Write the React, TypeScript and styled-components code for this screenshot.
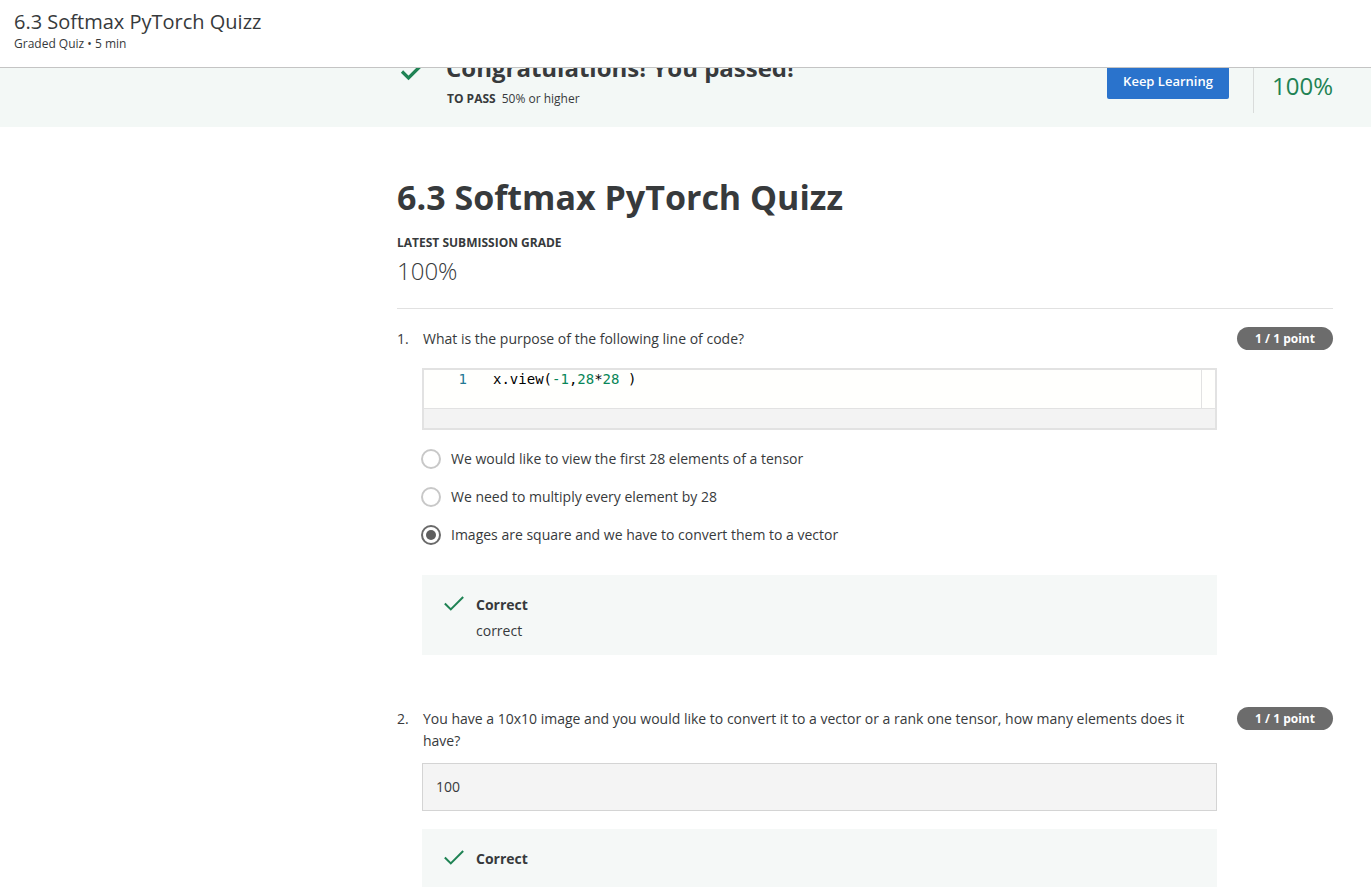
import React from "react";
import styled, { createGlobalStyle } from "styled-components";

const Global = createGlobalStyle`
  html, body { margin: 0; padding: 0; background: #fff; }
  body { font-family: "Open Sans", "Liberation Sans", sans-serif; color: #373a3c; }
  * { box-sizing: border-box; }
`;

const Header = styled.header`
  position: fixed;
  top: 0; left: 0; right: 0;
  height: 68px;
  background: #fff;
  border-bottom: 1px solid #c4c4c4;
  padding: 9px 14px 0;
  z-index: 10;
`;
const HeaderTitle = styled.div`
  font-size: 20px;
  line-height: 26px;
  color: #373a3c;
`;
const HeaderSub = styled.div`
  font-size: 12px;
  line-height: 18px;
  color: #373a3c;
`;

const Banner = styled.section`
  background: #f3f8f6;
  height: 127px;
  display: grid;
  grid-template-columns: 397px 1fr auto auto;
  align-items: start;
`;
const BannerMain = styled.div`
  grid-column: 2;
  display: flex;
  gap: 22px;
  padding-top: 52px;
  padding-left: 3px;
`;
const CheckWrap = styled.div`
  padding-top: 7px;
`;
const BannerText = styled.div`
  display: flex;
  flex-direction: column;
`;
const BannerTitle = styled.div`
  font-size: 24px;
  font-weight: 700;
  line-height: 32px;
  color: #373a3c;
`;
const PassLine = styled.div`
  font-size: 12px;
  line-height: 18px;
  margin-top: 6px;
  margin-left: 1px;
  color: #373a3c;
  b { font-weight: 700; margin-right: 6px; }
`;
const KeepButton = styled.button`
  margin-top: 62px;
  height: 37px;
  width: 122px;
  background: #2a73cc;
  color: #fff;
  border: none;
  border-radius: 2px;
  font-family: inherit;
  font-size: 13px;
  font-weight: 600;
`;
const GradeBlock = styled.div`
  margin-left: 24px;
  margin-right: 37px;
  border-left: 1px solid #d9dcdb;
  height: 113px;
  padding: 54px 0 0 18px;
  width: 81px;
  display: flex;
  flex-direction: column;
`;
const GradeLabel = styled.div`
  font-size: 12px;
  font-weight: 700;
  line-height: 16px;
`;
const GradeValue = styled.div`
  font-size: 24px;
  line-height: 32px;
  color: #1f8354;
`;

const Main = styled.main`
  padding-left: 397px;
  width: 1333px;
  padding-top: 47px;
`;
const Title = styled.h1`
  margin: 0;
  font-size: 34px;
  line-height: 46px;
  font-weight: 700;
  color: #373a3c;
`;
const SubLabel = styled.div`
  margin-top: 14px;
  font-size: 12px;
  font-weight: 700;
  line-height: 18px;
  text-transform: uppercase;
`;
const BigGrade = styled.div`
  font-size: 24px;
  line-height: 32px;
  font-weight: 300;
  margin-top: 3px;
`;
const Divider = styled.hr`
  border: none;
  border-top: 1px solid #e1e1e1;
  margin: 21px 0 0;
`;

const Question = styled.div<{ $top: number }>`
  display: grid;
  grid-template-columns: 26px 794px 116px;
  margin-top: ${(p) => p.$top}px;
  font-size: 14px;
  line-height: 22px;
`;
const QNum = styled.div``;
const QBody = styled.div`
  display: flex;
  flex-direction: column;
`;
const QText = styled.div`
  padding-right: 30px;
`;
const Badge = styled.div`
  justify-self: end;
  width: 96px;
  height: 23px;
  border-radius: 12px;
  background: #6c6c6c;
  color: #fff;
  font-size: 12px;
  font-weight: 700;
  line-height: 23px;
  text-align: center;
  margin-top: -1px;
`;

const CodeBox = styled.div`
  margin-top: 18px;
  margin-left: -1px;
  border: 2px solid #e2e2e2;
  background: #f3f3f3;
`;
const CodeRow = styled.div`
  display: flex;
  height: 39px;
  background: #fffffd;
  border-bottom: 1px solid #e2e2e2;
`;
const LineNo = styled.div`
  width: 43px;
  text-align: right;
  color: #237893;
  font-family: "DejaVu Sans Mono", monospace;
  font-size: 14px;
  line-height: 18px;
`;
const Code = styled.div`
  flex: 1;
  padding-left: 26px;
  font-family: "DejaVu Sans Mono", monospace;
  font-size: 14px;
  line-height: 18px;
  color: #000;
  white-space: pre;
`;
const Num = styled.span`
  color: #098658;
`;
const ScrollTrack = styled.div`
  width: 14px;
  border-left: 1px solid #e2e2e2;
`;
const CodeFoot = styled.div`
  height: 19px;
`;

const Options = styled.div`
  margin-top: 18px;
  display: flex;
  flex-direction: column;
  gap: 16px;
`;
const Option = styled.label`
  display: flex;
  align-items: center;
  gap: 10px;
  margin-left: -2px;
  height: 22px;
`;
const Radio = styled.span<{ $on?: boolean }>`
  width: 20px;
  height: 20px;
  border-radius: 50%;
  border: 2px solid ${(p) => (p.$on ? "#6a6a6a" : "#c8c8c8")};
  display: flex;
  align-items: center;
  justify-content: center;
  &::after {
    content: "";
    width: 10px;
    height: 10px;
    border-radius: 50%;
    background: ${(p) => (p.$on ? "#5e5e5e" : "transparent")};
  }
`;

const Feedback = styled.div<{ $top: number }>`
  margin-top: ${(p) => p.$top}px;
  margin-left: -1px;
  background: #f5f8f7;
  padding: 19px 20px 13px 21px;
  display: flex;
  gap: 11px;
`;
const FbCheck = styled.div`
  margin-top: -2px;
`;
const FbText = styled.div`
  display: flex;
  flex-direction: column;
  gap: 4px;
  b { font-weight: 700; }
`;

const AnswerInput = styled.div`
  margin-top: 11px;
  margin-left: -1px;
  height: 48px;
  border: 1px solid #d4d4d4;
  background: #f4f4f4;
  padding: 0 13px;
  display: flex;
  align-items: center;
`;

const Check = ({ size = 24, w = 2.2 }: { size?: number; w?: number }) => (
  <svg width={size} height={size} viewBox="0 0 24 24" fill="none">
    <path d="M2 12.5 L8.5 19 L22 5.5" stroke="#1f8354" strokeWidth={w} />
  </svg>
);

export default function App() {
  return (
    <>
      <Global />
      <Header>
        <HeaderTitle>6.3 Softmax PyTorch Quizz</HeaderTitle>
        <HeaderSub>Graded Quiz • 5 min</HeaderSub>
      </Header>
      <Banner>
        <BannerMain>
          <CheckWrap>
            <Check size={24} w={3.2} />
          </CheckWrap>
          <BannerText>
            <BannerTitle>Congratulations! You passed!</BannerTitle>
            <PassLine>
              <b>TO PASS</b>50% or higher
            </PassLine>
          </BannerText>
        </BannerMain>
        <KeepButton>Keep Learning</KeepButton>
        <GradeBlock>
          <GradeLabel>GRADE</GradeLabel>
          <GradeValue>100%</GradeValue>
        </GradeBlock>
      </Banner>
      <Main>
        <Title>6.3 Softmax PyTorch Quizz</Title>
        <SubLabel>Latest Submission Grade</SubLabel>
        <BigGrade>100%</BigGrade>
        <Divider />

        <Question $top={19}>
          <QNum>1.</QNum>
          <QBody>
            <QText>What is the purpose of the following line of code?</QText>
            <CodeBox>
              <CodeRow>
                <LineNo>1</LineNo>
                <Code>
                  x.view(<Num>-1</Num>,<Num>28</Num>*<Num>28</Num> )
                </Code>
                <ScrollTrack />
              </CodeRow>
              <CodeFoot />
            </CodeBox>
            <Options>
              <Option>
                <Radio />
                We would like to view the first 28 elements of a tensor
              </Option>
              <Option>
                <Radio />
                We need to multiply every element by 28
              </Option>
              <Option>
                <Radio $on />
                Images are square and we have to convert them to a vector
              </Option>
            </Options>
            <Feedback $top={29}>
              <FbCheck>
                <Check size={22} />
              </FbCheck>
              <FbText>
                <b>Correct</b>
                <span>correct</span>
              </FbText>
            </Feedback>
          </QBody>
          <Badge>1 / 1 point</Badge>
        </Question>

        <Question $top={53}>
          <QNum>2.</QNum>
          <QBody>
            <QText>
              You have a 10x10 image and you would like to convert it to a vector or a rank one tensor, how many
              elements does it have?
            </QText>
            <AnswerInput>100</AnswerInput>
            <Feedback $top={18}>
              <FbCheck>
                <Check size={22} />
              </FbCheck>
              <FbText>
                <b>Correct</b>
              </FbText>
            </Feedback>
          </QBody>
          <Badge>1 / 1 point</Badge>
        </Question>
      </Main>
    </>
  );
}
